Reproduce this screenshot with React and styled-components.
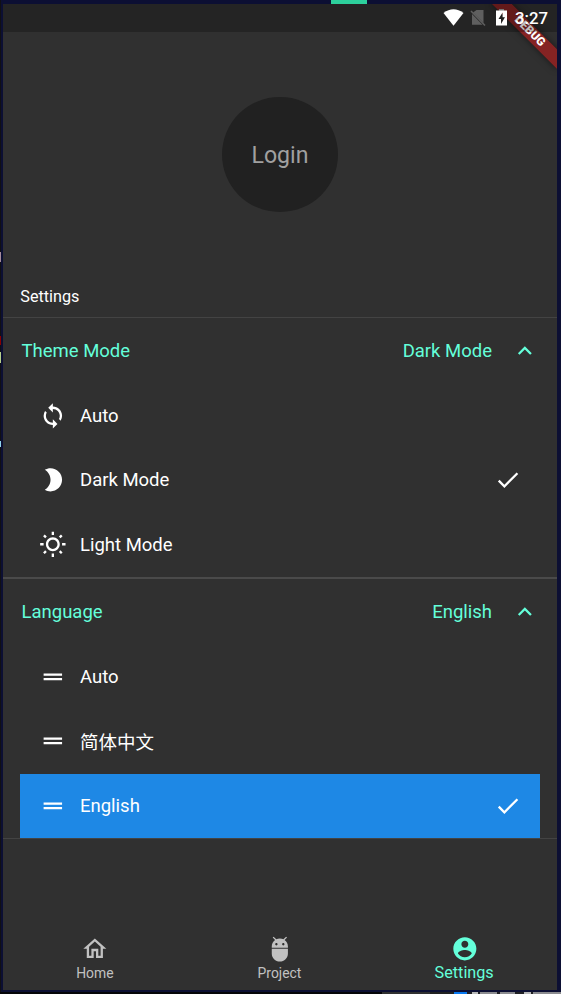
import React from "react";
import styled, { createGlobalStyle } from "styled-components";
import {
  MdSync,
  MdBrightness2,
  MdOutlineWbSunny,
  MdDragHandle,
  MdCheck,
  MdExpandLess,
  MdOutlineHome,
  MdAdb,
} from "react-icons/md";

const ACCENT = "#64ffda";

const GlobalStyle = createGlobalStyle`
  * { box-sizing: border-box; }
  body {
    margin: 0;
    background: #0c0c2c;
    overflow: hidden;
    font-family: Roboto, "Noto Sans CJK SC", sans-serif;
  }
`;

const Desktop = styled.div`
  position: relative;
  width: 561px;
  height: 994px;
  padding: 4px 4px 4px 3px;
  background: #0c0f33;
`;

const Tab = styled.div`
  position: absolute;
  top: 0;
  left: 331px;
  width: 36px;
  height: 4px;
  background: #2dd09c;
`;

const Speck = styled.div`
  position: absolute;
  left: 0;
  top: ${(p) => p.$y}px;
  width: 1px;
  height: ${(p) => p.$h}px;
  background: ${(p) => p.$color};
`;

const LeftStrip = styled.div`
  position: absolute;
  left: 0;
  top: 0;
  width: 1px;
  height: 994px;
  background: #101014;
`;

const BottomStrip = styled.div`
  position: absolute;
  left: 0;
  bottom: 0;
  display: flex;
  width: 561px;
  height: 2px;
  background: #050508;
`;

const StripPart = styled.div`
  width: ${(p) => p.$w}px;
  height: 2px;
  background: ${(p) => p.$color};
`;

const Screen = styled.div`
  position: relative;
  display: flex;
  flex-direction: column;
  width: 554px;
  height: 986px;
  overflow: hidden;
  background: #303030;
  color: #fff;
`;

const StatusBar = styled.header`
  position: relative;
  z-index: 1;
  display: flex;
  flex: none;
  align-items: center;
  justify-content: flex-end;
  height: 28px;
  padding-right: 9px;
  background: rgba(0, 0, 0, 0.25);
`;

const StatusIcons = styled.svg`
  display: block;
  width: 72px;
  height: 28px;
`;

const Clock = styled.span`
  width: 36px;
  padding-left: 3px;
  font-size: 16.8px;
  font-weight: 500;
  line-height: 28px;
  white-space: nowrap;
`;

const Ribbon = styled.div`
  position: absolute;
  top: 32.3px;
  left: 507.8px;
  width: 92.4px;
  height: 13.9px;
  background: rgba(183, 28, 28, 0.63);
  box-shadow: 0 0 7px rgba(0, 0, 0, 0.5);
  color: #fff;
  font-size: 11.8px;
  font-weight: 900;
  line-height: 13.9px;
  text-align: center;
  transform: rotate(45deg);
  transform-origin: 46.2px -32.3px;
`;

const Profile = styled.section`
  display: flex;
  flex: none;
  justify-content: center;
  height: 244px;
  padding-top: 64.5px;
`;

const LoginButton = styled.button`
  width: 115.5px;
  height: 115.5px;
  padding: 2px 0 0;
  border: 0;
  border-radius: 50%;
  background: #212121;
  color: #a0a0a0;
  font: 400 23.1px/113.5px Roboto, sans-serif;
`;

const SectionTitle = styled.h1`
  flex: none;
  height: 41px;
  margin: 0;
  padding-left: 17.3px;
  font-size: 16.2px;
  font-weight: 400;
  line-height: 41px;
`;

const Divider = styled.hr`
  flex: none;
  height: ${(p) => p.$h}px;
  margin: 0;
  border: 0;
  background: ${(p) => (p.$h > 1.5 ? "#4a4a4a" : "#434343")};
`;

const Group = styled.section`
  display: flex;
  flex: none;
  flex-direction: column;
`;

const GroupHeader = styled.div`
  display: flex;
  align-items: center;
  height: 65px;
  padding: 0 18.8px 0 18.5px;
  color: ${ACCENT};
  font-size: 18.5px;
`;

const Label = styled.span`
  flex: 1;
`;

const Current = styled.span`
  margin-right: 18.5px;
`;

const Option = styled.div`
  display: flex;
  align-items: center;
  height: 64.6px;
  margin: 0 17.4px;
  padding: 0 18.3px;
  background: ${(p) => (p.$selected ? "#1e88e5" : "transparent")};
  font-size: 18.5px;
`;

const IconSlot = styled.span`
  display: flex;
  width: 41.3px;

  svg {
    width: 27.7px;
    height: 27.7px;
  }
`;

const TailIcon = styled.span`
  display: flex;

  svg {
    width: 27.7px;
    height: 27.7px;
  }
`;

const Nav = styled.nav`
  display: grid;
  flex: none;
  grid-template-columns: repeat(3, 1fr);
  height: 65px;
  margin-top: auto;
`;

const NavItem = styled.div`
  display: flex;
  flex-direction: column;
  align-items: center;
  padding-top: 10px;
  color: ${(p) => (p.$active ? ACCENT : "#c1c1c1")};
  font-size: ${(p) => (p.$active ? 16.2 : 13.9)}px;
  line-height: 20px;

  svg {
    width: 27.7px;
    height: 27.7px;
  }
`;

const NavLabel = styled.span`
  margin-right: 1px;
`;

function AccountIcon() {
  return (
    <svg viewBox="0 0 24 24" fill="currentColor">
      <path d="M12 2C6.48 2 2 6.48 2 12s4.48 10 10 10 10-4.48 10-10S17.52 2 12 2zm0 3c1.66 0 3 1.34 3 3s-1.34 3-3 3-3-1.34-3-3 1.34-3 3-3zm0 14.2c-2.5 0-4.71-1.28-6-3.22.03-1.99 4-3.08 6-3.08 1.99 0 5.97 1.09 6 3.08-1.29 1.94-3.5 3.22-6 3.22z" />
    </svg>
  );
}

function SystemIcons() {
  return (
    <StatusIcons viewBox="440 4 72 28">
      <path d="M443.5 13 Q453.5 5.5 463.5 13 L453.5 25.8 Z" fill="#fff" />
      <path d="M476.5 10 H483.5 V23 L473 12.5 Z M472 14 L482.5 24.8 H472 Z" fill="#5f5f5f" />
      <path d="M471 11 L485 25.5" stroke="#5f5f5f" strokeWidth="1.5" />
      <path d="M499 9 h5 v2 h-5 z" fill="#777" />
      <path
        d="M496 10.6 h11 v15 h-11 z M502.6 12.5 L498.5 19 H501 V24 L505 17.3 H502.6 Z"
        fill="#fff"
        fillRule="evenodd"
      />
    </StatusIcons>
  );
}

const groups = [
  {
    title: "Theme Mode",
    current: "Dark Mode",
    options: [
      { label: "Auto", Icon: MdSync },
      { label: "Dark Mode", Icon: MdBrightness2, checked: true },
      { label: "Light Mode", Icon: MdOutlineWbSunny },
    ],
  },
  {
    title: "Language",
    current: "English",
    options: [
      { label: "Auto", Icon: MdDragHandle },
      { label: "简体中文", Icon: MdDragHandle },
      { label: "English", Icon: MdDragHandle, checked: true, selected: true },
    ],
  },
];

function SettingsGroup({ title, current, options }) {
  return (
    <Group>
      <GroupHeader>
        <Label>{title}</Label>
        <Current>{current}</Current>
        <TailIcon><MdExpandLess /></TailIcon>
      </GroupHeader>
      {options.map(({ label, Icon, checked, selected }) => (
        <Option key={label} $selected={selected}>
          <IconSlot><Icon /></IconSlot>
          <Label>{label}</Label>
          {checked && <TailIcon><MdCheck /></TailIcon>}
        </Option>
      ))}
    </Group>
  );
}

const windowEdge = [
  [382, "#050508"], [48, "#303030"], [24, "#202020"], [13, "#0878f0"], [5, "#202024"],
  [6, "#b8b8b8"], [2, "#202024"], [17, "#8c8c90"], [3, "#202024"], [15, "#8c8c90"],
  [9, "#202024"], [7, "#b8b8b8"], [2, "#202024"], [28, "#8c8c90"],
];

export default function App() {
  return (
    <Desktop>
      <GlobalStyle />
      <LeftStrip />
      <Speck $y={252} $h={10} $color="#a58b9c" />
      <Speck $y={336} $h={9} $color="#8b0000" />
      <Speck $y={352} $h={11} $color="#b5cf8a" />
      <Speck $y={441} $h={6} $color="#8fd5ee" />
      <Tab />
      <Screen>
        <StatusBar>
          <SystemIcons />
          <Clock>3:27</Clock>
        </StatusBar>
        <Profile>
          <LoginButton>Login</LoginButton>
        </Profile>
        <SectionTitle>Settings</SectionTitle>
        <Divider $h={1.4} />
        <SettingsGroup {...groups[0]} />
        <Divider $h={2.2} />
        <SettingsGroup {...groups[1]} />
        <Divider $h={1.2} />
        <Nav>
          <NavItem><MdOutlineHome /><NavLabel>Home</NavLabel></NavItem>
          <NavItem><MdAdb /><NavLabel>Project</NavLabel></NavItem>
          <NavItem $active><AccountIcon /><NavLabel>Settings</NavLabel></NavItem>
        </Nav>
        <Ribbon>DEBUG</Ribbon>
      </Screen>
      <BottomStrip>
        {windowEdge.map(([w, color], i) => (
          <StripPart key={i} $w={w} $color={color} />
        ))}
      </BottomStrip>
    </Desktop>
  );
}
